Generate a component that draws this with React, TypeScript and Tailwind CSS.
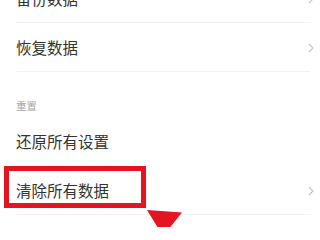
import React from "react";

const Chevron = () => (
  <svg width="6" height="10" viewBox="0 0 6 10" fill="none">
    <polyline points="1,1 5,5 1,9" stroke="#c4c4c4" strokeWidth="1.1" />
  </svg>
);

const Row = ({ label, arrow = true, line = true, children }: { label: string; arrow?: boolean; line?: boolean; children?: React.ReactNode }) => (
  <div className="relative h-[49px] ml-4 mr-1 flex items-center justify-between">
    <span className="text-[15.5px] text-[#333] leading-none">{label}</span>
    {arrow && <Chevron />}
    {line && <div className="absolute left-0 right-1 bottom-0 h-px bg-[#f3f3f3]" />}
    {children}
  </div>
);

export default function App() {
  return (
    <div
      className="w-[318px] h-[227px] overflow-hidden bg-white"
      style={{ fontFamily: '"Noto Sans CJK SC", "Noto Sans", sans-serif' }}
    >
      <div className="-mt-[26px]">
        <Row label="备份数据" />
        <Row label="恢复数据" />
        <div className="h-[45px] pl-4 flex items-end pb-[6px]">
          <span className="text-[10.5px] text-[#a8a8a8] leading-none">重置</span>
        </div>
        <Row label="还原所有设置" arrow={false} line={false} />
        <Row label="清除所有数据">
          <div className="absolute -left-3 top-0 w-[142px] h-[42px] border-[5px] border-[#e5141e]" />
          <div
            className="absolute left-[131px] top-[44px] w-[35px] h-[20px] bg-[#e5141e]"
            style={{ clipPath: "polygon(0 0, 100% 12%, 60% 100%, 35% 100%)" }}
          />
        </Row>
      </div>
    </div>
  );
}
